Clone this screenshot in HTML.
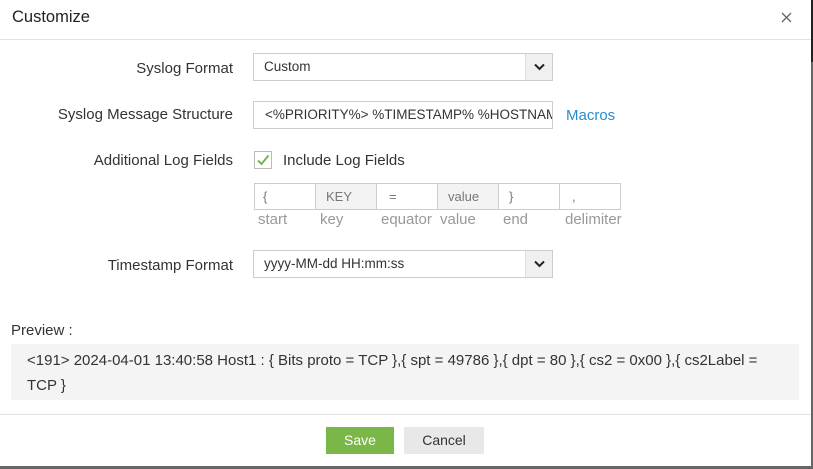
<!DOCTYPE html>
<html><head><style>
*{box-sizing:border-box;margin:0;padding:0}
body{width:813px;height:469px;background:#666;font-family:"Liberation Sans",sans-serif;color:#333;font-size:15px;position:relative;overflow:hidden}
.dlg{position:absolute;left:0;top:0;width:811px;height:466px;background:#fff}
.topstrip{position:absolute;left:811px;top:0;width:2px;height:62px;background:#222}
.abs{position:absolute}
.hdr{left:0;top:0;width:811px;height:40px;border-bottom:1px solid #e3e3e3}
.title{left:12px;top:8px;font-size:16.5px;color:#222}
.lbl{right:578px;font-size:15px;color:#333;text-align:right;white-space:nowrap}
.inp{border:1px solid #ccc;background:#fff;height:28px;padding:5px 10px;font-size:13.5px;white-space:nowrap;overflow:hidden}
.dd{position:absolute;right:0;top:0;width:27px;height:26px;background:#f0f0f0;border-left:1px solid #ddd}
.dd svg{position:absolute;left:8px;top:9px}
.box{position:absolute;top:183px;height:27px;width:62px;border:1px solid #ccc;font-size:13px;color:#777;padding:5px 8px}
.sub{position:absolute;top:211px;font-size:15px;color:#999}
</style></head><body>
<div class="dlg">
<div class="abs hdr"></div>
<div class="abs title">Customize</div>
<svg class="abs" style="left:781px;top:12px" width="11" height="11" viewBox="0 0 11 11"><path d="M1 1L10 10M10 1L1 10" stroke="#666" stroke-width="1.3"/></svg>
<div class="abs lbl" style="top:60px">Syslog Format</div>
<div class="abs inp" style="left:253px;top:53px;width:300px">Custom<div class="dd"><svg width="11" height="8" viewBox="0 0 11 8"><path d="M1 1.5L5.5 6L10 1.5" stroke="#222" stroke-width="2" fill="none"/></svg></div></div>
<div class="abs lbl" style="top:106px">Syslog Message Structure</div>
<div class="abs inp" style="left:253px;top:101px;width:300px;padding-left:11px">&lt;%PRIORITY%&gt; %TIMESTAMP% %HOSTNAME%</div>
<div class="abs" style="left:566px;top:107px;color:#2a8ccf">Macros</div>
<div class="abs lbl" style="top:152px">Additional Log Fields</div>
<div class="abs" style="left:254px;top:151px;width:18px;height:18px;border:1px solid #bbb"><svg width="16" height="16" viewBox="0 0 16 16"><path d="M3 8.5L6.5 12L13.5 3.5" stroke="#6db33f" stroke-width="1.8" fill="none"/></svg></div>
<div class="abs" style="left:283px;top:152px">Include Log Fields</div>
<div class="box" style="left:254px">{</div>
<div class="box" style="left:315px;background:#f3f3f3;padding-left:10px">KEY</div>
<div class="box" style="left:376px;padding-left:12px">=</div>
<div class="box" style="left:437px;background:#f3f3f3;padding-left:10px">value</div>
<div class="box" style="left:498px;padding-left:10px">}</div>
<div class="box" style="left:559px;padding-left:12px">,</div>
<div class="sub" style="left:258px">start</div>
<div class="sub" style="left:320px">key</div>
<div class="sub" style="left:381px">equator</div>
<div class="sub" style="left:440px">value</div>
<div class="sub" style="left:503px">end</div>
<div class="sub" style="left:565px">delimiter</div>
<div class="abs lbl" style="top:257px">Timestamp Format</div>
<div class="abs inp" style="left:253px;top:250px;width:300px">yyyy-MM-dd HH:mm:ss<div class="dd"><svg width="11" height="8" viewBox="0 0 11 8"><path d="M1 1.5L5.5 6L10 1.5" stroke="#222" stroke-width="2" fill="none"/></svg></div></div>
<div class="abs" style="left:11px;top:322px">Preview :</div>
<div class="abs" style="left:11px;top:344px;width:788px;height:56px;background:#f4f4f4;padding:4px 16px;line-height:25px;white-space:nowrap">&lt;191&gt; 2024-04-01 13:40:58 Host1 : { Bits proto = TCP },{ spt = 49786 },{ dpt = 80 },{ cs2 = 0x00 },{ cs2Label =<br>TCP }</div>
<div class="abs" style="left:0;top:414px;width:811px;border-top:1px solid #e3e3e3"></div>
<div class="abs" style="left:326px;top:427px;width:68px;height:27px;background:#7ab648;color:#fff;text-align:center;line-height:27px;font-size:14px">Save</div>
<div class="abs" style="left:404px;top:427px;width:80px;height:27px;background:#e8e8e8;color:#333;text-align:center;line-height:27px;font-size:14px">Cancel</div>
</div>
<div class="topstrip"></div>
</body></html>
